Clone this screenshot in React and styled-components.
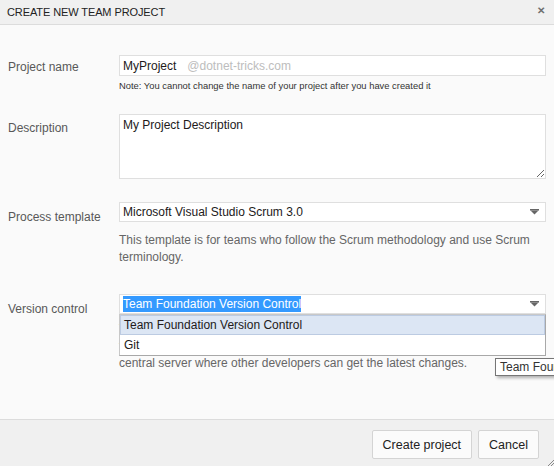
import React from "react";
import styled, { createGlobalStyle } from "styled-components";

const GlobalStyle = createGlobalStyle`
  html, body {
    margin: 0;
    padding: 0;
    background: #fafafa;
    font-family: "Liberation Sans", Arial, sans-serif;
  }
  * { box-sizing: border-box; }
`;

const Dialog = styled.div`
  position: relative;
  width: 554px;
  height: 466px;
  display: flex;
  flex-direction: column;
  background: #fafafa;
  overflow: hidden;
`;

const Header = styled.div`
  height: 25px;
  display: flex;
  align-items: center;
  justify-content: space-between;
  padding: 0 9px 0 7px;
  background: #f0f0f0;
  border-bottom: 1px solid #dcdcdc;
`;

const Title = styled.h1`
  margin: 0;
  font-size: 11px;
  font-weight: normal;
  color: #222;
  letter-spacing: -0.1px;
`;

const Close = styled.span`
  font-size: 10px;
  font-weight: bold;
  color: #6f6f6f;
  line-height: 1;
  margin-top: -2px;
`;

const Body = styled.div`
  flex: 1;
  padding: 30px 8px 0 8px;
`;

const Row = styled.div`
  display: grid;
  grid-template-columns: 111px 1fr;
  margin-top: ${(p) => p.$top || 0}px;
`;

const Label = styled.label`
  font-size: 12px;
  color: #585858;
  padding-top: ${(p) => p.$pad || 5}px;
`;

const Control = styled.div`
  position: relative;
`;

const Box = styled.div`
  height: 21px;
  display: flex;
  align-items: center;
  padding: 0 3px;
  background: #fff;
  border: 1px solid #dfdfdf;
  font-size: 12px;
  color: #221a1a;
`;

const Watermark = styled.span`
  color: #bdbdbd;
  margin-left: 11px;
`;

const Note = styled.div`
  margin-top: 3px;
  font-size: 9.4px;
  line-height: 13px;
  color: #333;
`;

const TextArea = styled.textarea`
  display: block;
  width: 100%;
  height: 65px;
  margin: 0;
  padding: 3px 3px;
  border: 1px solid #dfdfdf;
  background: #fff;
  font-family: inherit;
  font-size: 12px;
  color: #221a1a;
  resize: vertical;
  outline: none;
`;

const Select = styled(Box)`
  height: 20px;
  justify-content: space-between;
  padding-right: 6px;
`;

const Selected = styled.span`
  background: ${(p) => (p.$highlight ? "#3399ff" : "transparent")};
  color: ${(p) => (p.$highlight ? "#fff" : "inherit")};
  line-height: 16px;
`;

const Help = styled.div`
  margin-top: ${(p) => p.$top || 8}px;
  font-size: 12px;
  line-height: 17px;
  color: #666;
`;

const Menu = styled.ul`
  position: absolute;
  top: 20px;
  left: 0;
  right: 0;
  margin: 0;
  padding: 0;
  list-style: none;
  background: #fff;
  border: 1px solid #c8c8c8;
  border-right-color: #a8a8a8;
  border-bottom-color: #a8a8a8;
  z-index: 2;
`;

const Option = styled.li`
  height: 20px;
  display: flex;
  align-items: center;
  padding: 0 3px;
  font-size: 12px;
  color: #221a1a;
  background: ${(p) => (p.$active ? "#dce6f4" : "#fff")};
  border: 1px solid ${(p) => (p.$active ? "#bccbe2" : "transparent")};
`;

const Tooltip = styled.div`
  position: absolute;
  left: 495px;
  top: 358px;
  padding: 0 4px;
  height: 18px;
  display: flex;
  align-items: center;
  white-space: nowrap;
  font-size: 12px;
  color: #333;
  background: #fff;
  border: 1px solid #767676;
  box-shadow: 2px 2px 3px rgba(0, 0, 0, 0.3);
  z-index: 3;
`;

const Footer = styled.div`
  height: 47px;
  display: flex;
  justify-content: flex-end;
  align-items: flex-start;
  gap: 6px;
  padding: 10px 15px 0 0;
  background: #f0f0f0;
  border-top: 1px solid #dcdcdc;
`;

const Button = styled.button`
  height: 29px;
  padding: 0 ${(p) => p.$pad || 11}px;
  font-family: inherit;
  font-size: 12.5px;
  color: #222;
  background: #fbfbfb;
  border: 1px solid #d4d4d4;
  border-radius: 2px;
`;

const Grip = styled.svg`
  position: absolute;
  right: 0;
  bottom: 0;
`;

const Arrow = () => (
  <svg width="9" height="6" viewBox="0 0 9 6">
    <rect x="0" y="0" width="9" height="1.5" fill="#666" />
    <path d="M0.5 1.5 H8.5 L4.5 5.5 Z" fill="#666" />
  </svg>
);

export default function App() {
  return (
    <>
      <GlobalStyle />
      <Dialog>
        <Header>
          <Title>CREATE NEW TEAM PROJECT</Title>
          <Close>✕</Close>
        </Header>

        <Body>
          <Row>
            <Label $pad={5}>Project name</Label>
            <Control>
              <Box>
                MyProject<Watermark>@dotnet-tricks.com</Watermark>
              </Box>
              <Note>Note: You cannot change the name of your project after you have created it</Note>
            </Control>
          </Row>

          <Row $top={22}>
            <Label $pad={7}>Description</Label>
            <Control>
              <TextArea defaultValue="My Project Description" />
            </Control>
          </Row>

          <Row $top={23}>
            <Label $pad={8}>Process template</Label>
            <Control>
              <Select>
                <Selected>Microsoft Visual Studio Scrum 3.0</Selected>
                <Arrow />
              </Select>
              <Help $top={10}>
                This template is for teams who follow the Scrum methodology and use Scrum terminology.
              </Help>
            </Control>
          </Row>

          <Row $top={28}>
            <Label $pad={8}>Version control</Label>
            <Control>
              <Select>
                <Selected $highlight>Team Foundation Version Control</Selected>
                <Arrow />
              </Select>
              <Menu>
                <Option $active>Team Foundation Version Control</Option>
                <Option>Git</Option>
              </Menu>
              <Help $top={7}>
                Team Foundation Version Control uses a single, centralized server repository
                <br />
                to track and version files. Local changes are always checked in to the
                <br />
                central server where other developers can get the latest changes.
              </Help>
            </Control>
          </Row>
        </Body>

        <Footer>
          <Button $pad={10}>Create project</Button>
          <Button $pad={10}>Cancel</Button>
        </Footer>

        <Tooltip>Team Foundation Version Control</Tooltip>

        <Grip width="7" height="7" viewBox="0 0 7 7">
          <path d="M7 1 L1 7 M7 4 L4 7" stroke="#888" strokeWidth="1" />
        </Grip>
      </Dialog>
    </>
  );
}
